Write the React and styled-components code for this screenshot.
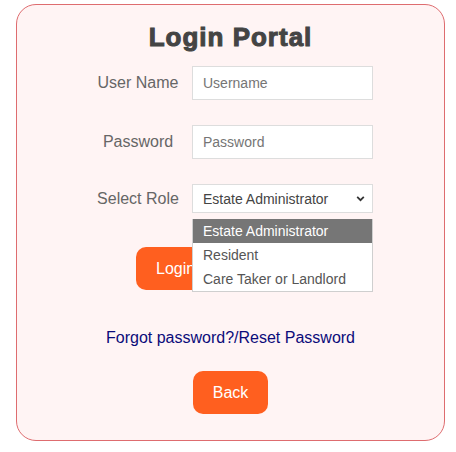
import React from 'react'
import styled, { createGlobalStyle } from 'styled-components'

const GlobalStyle = createGlobalStyle`
    body {
        margin: 0;
        background: #fff;
        font-family: "Liberation Sans", Arial, sans-serif;
    }
`;

const roles = ['Estate Administrator', 'Resident', 'Care Taker or Landlord']

function App() {
    return (
        <>
            <GlobalStyle />
            <CardStyled>
                <h1>Login Portal</h1>
                <FormGrid>
                    <Label>User Name</Label>
                    <Field placeholder="Username" />
                    <Label>Password</Label>
                    <Field type="password" placeholder="Password" />
                    <Label>Select Role</Label>
                    <SelectWrap>
                        <Select defaultValue={roles[0]}>
                            {roles.map((role) => <option key={role}>{role}</option>)}
                        </Select>
                        <Chevron viewBox="0 0 10 10">
                            <path d="M2 3.5 L5 6.5 L8 3.5" />
                        </Chevron>
                        <Menu>
                            {roles.map((role, i) => (
                                <MenuItem key={role} $active={i === 0}>{role}</MenuItem>
                            ))}
                        </Menu>
                    </SelectWrap>
                </FormGrid>
                <LoginRow>
                    <Button>Login</Button>
                </LoginRow>
                <ForgotLink href="#">Forgot password?/Reset Password</ForgotLink>
                <Button>Back</Button>
            </CardStyled>
        </>
    )
}

const CardStyled = styled.div`
    margin: 4px 11px 0 16px;
    width: 429px;
    box-sizing: border-box;
    min-height: 437px;
    background: #fff4f4;
    border: 1px solid #de6c6f;
    border-radius: 20px;
    padding: 17px 0 26px;
    display: flex;
    flex-direction: column;
    align-items: center;
    h1 {
        margin: 0 0 14px;
        font-size: 26px;
        line-height: 30px;
        font-weight: 700;
        letter-spacing: 1px;
        color: #444;
        -webkit-text-stroke: 1px #444;
    }
`;

const FormGrid = styled.div`
    display: grid;
    grid-template-columns: 100px 181px;
    column-gap: 4px;
    row-gap: 25px;
    align-items: center;
`;

const Label = styled.label`
    text-align: center;
    font-size: 16px;
    color: #666;
`;

const Field = styled.input`
    box-sizing: border-box;
    height: 34px;
    width: 181px;
    border: 1px solid #ddd;
    background: #fff;
    padding: 0 10px;
    font-size: 14px;
    font-family: "Liberation Sans", Arial, sans-serif;
    outline: none;
    &::placeholder {
        color: #757575;
    }
`;

const SelectWrap = styled.div`
    position: relative;
    width: 181px;
    height: 29px;
`;

const Select = styled.select`
    appearance: none;
    box-sizing: border-box;
    width: 100%;
    height: 29px;
    border: 1px solid #ddd;
    background: #fff;
    padding: 0 10px;
    font-size: 14px;
    color: #444;
    font-family: "Liberation Sans", Arial, sans-serif;
    outline: none;
`;

const Chevron = styled.svg`
    position: absolute;
    right: 7px;
    top: 9px;
    width: 11px;
    height: 11px;
    fill: none;
    stroke: #333;
    stroke-width: 1.6;
    pointer-events: none;
`;

const Menu = styled.div`
    position: absolute;
    z-index: 2;
    top: 35px;
    left: 0;
    width: 181px;
    box-sizing: border-box;
    background: #fff;
    border: 1px solid #cfcfcf;
    border-top: none;
`;

const MenuItem = styled.div`
    height: 24px;
    line-height: 24px;
    padding-left: 10px;
    font-size: 14px;
    color: ${({ $active }) => ($active ? '#fff' : '#555')};
    background: ${({ $active }) => ($active ? '#767676' : '#fff')};
`;

const LoginRow = styled.div`
    align-self: flex-start;
    margin: 34px 0 0 119px;
`;

const Button = styled.button`
    background: #ff5f1f;
    color: #fff;
    border: none;
    border-radius: 10px;
    padding: 12px 20px;
    font-size: 16px;
    line-height: 19px;
    font-family: "Liberation Sans", Arial, sans-serif;
    cursor: pointer;
`;

const ForgotLink = styled.a`
    margin: 39px 0 24px;
    font-size: 16px;
    color: #0b0b7a;
    text-decoration: none;
`;

export default App
